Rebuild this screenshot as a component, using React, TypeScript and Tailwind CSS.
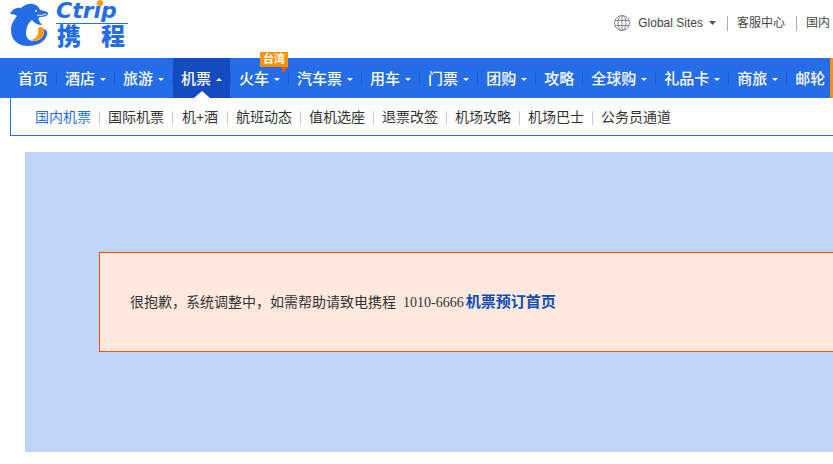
import React from "react";

type NavItem = { label: string; caret?: boolean; active?: boolean; tag?: string };

const navItems: NavItem[] = [
  { label: "首页" },
  { label: "酒店", caret: true },
  { label: "旅游", caret: true },
  { label: "机票", caret: true, active: true },
  { label: "火车", caret: true, tag: "台湾" },
  { label: "汽车票", caret: true },
  { label: "用车", caret: true },
  { label: "门票", caret: true },
  { label: "团购", caret: true },
  { label: "攻略" },
  { label: "全球购", caret: true },
  { label: "礼品卡", caret: true },
  { label: "商旅", caret: true },
  { label: "邮轮" },
];

const subItems = [
  "国内机票",
  "国际机票",
  "机+酒",
  "航班动态",
  "值机选座",
  "退票改签",
  "机场攻略",
  "机场巴士",
  "公务员通道",
];

function Logo() {
  return (
    <a href="#" aria-label="Ctrip 携程" className="block">
      <svg className="overflow-visible" width="122" height="54" viewBox="0 0 122 54">
        <path
          d="M4 14C6 10 10 7 15 8C18 5 23 3 27 4C31 5 33 7 34 10C37 11 41 11 42 13C42 16 38 17 34 17C31 18 33 21 36 25C32 25 28 23 26 20C22 23 20 28 20 33C20 38 23 41 27 41C33 41 37 38 38 33C37 32 36 30 37 29C40 29 42 32 41 35C39 42 31 46 22 46C12 46 5 40 5 30C5 24 8 20 11 16C8 14 6 14 4 14Z"
          fill="#256de6"
        />
        <circle cx="30" cy="11" r="1" fill="#fff" />
        <path d="M31 15C34 16 37 15 40 14" stroke="#fff" fill="none" />
        <path
          d="M32 28C34 26 38 27 38 30C39 36 35 40 28 41L25 40C31 38 33 35 32 28Z"
          fill="#ff9913"
        />
        <path d="M50 23.5H122" stroke="#256de6" />
        <text
          x="50"
          y="18"
          fill="#256de6"
          className="font-['DejaVu_Sans',sans-serif] text-[22px] font-bold italic"
        >
          Ctrip
        </text>
        <circle cx="94" cy="3" r="3" fill="#ff9913" />
        <text
          x="51"
          y="45"
          fill="#256de6"
          className="font-['Noto_Sans_CJK_SC',sans-serif] text-[24px] font-black"
        >
          携
        </text>
        <text
          x="95"
          y="45"
          fill="#256de6"
          className="font-['Noto_Sans_CJK_SC',sans-serif] text-[24px] font-black"
        >
          程
        </text>
      </svg>
    </a>
  );
}

function GlobeIcon() {
  return (
    <svg width="16" height="16" viewBox="0 0 16 16" fill="none" stroke="#888">
      <circle cx="8" cy="8" r="7.5" />
      <ellipse cx="8" cy="8" rx="4" ry="7.5" />
      <path d="M8 .5V15.5M1 5.5H15M1 10.5H15" />
    </svg>
  );
}

function Header() {
  return (
    <header className="flex h-[58px] items-start justify-between pl-[6px] pr-[3px]">
      <Logo />
      <div className="flex h-[46px] items-center text-[12px] text-[#444]">
        <button className="flex items-center">
          <GlobeIcon />
          <span className="ml-2">Global Sites</span>
          <svg className="ml-[6px]" width="7" height="4" viewBox="0 0 7 4">
            <path d="M0 0H7L3.5 4Z" fill="#555" />
          </svg>
        </button>
        <span className="ml-[11px] mr-[9px] h-[15px] w-px bg-[#aaa]" />
        <a href="#">客服中心</a>
        <span className="ml-[11px] mr-[9px] h-[15px] w-px bg-[#aaa]" />
        <a href="#">国内</a>
      </div>
    </header>
  );
}

function MainNav() {
  return (
    <nav className="flex h-10 justify-between bg-[#256de6] pl-[10px]">
      <ul className="flex">
        {navItems.map((item) => (
          <li key={item.label} className="relative flex shrink-0 items-center">
            <a
              href="#"
              className={`flex h-full items-center px-2 pt-[2px] text-[15px] font-medium text-white ${
                item.active ? "bg-[#144bbf]" : ""
              }`}
            >
              {item.label}
              {item.caret && (
                <svg className="ml-[5px]" width="6" height="3" viewBox="0 0 6 3">
                  <path d={item.active ? "M0 3H6L3 0Z" : "M0 0H6L3 3Z"} fill="#fff" />
                </svg>
              )}
            </a>
            <span className="h-[14px] w-px bg-[#2457d8]" />
            {item.active && (
              <svg className="absolute bottom-0 left-[21px]" width="16" height="7" viewBox="0 0 16 7">
                <path d="M0 7L8 0L16 7Z" fill="#fff" />
              </svg>
            )}
            {item.tag && (
              <span className="absolute -top-[6px] left-[29px] flex h-[15px] w-7 items-center justify-center bg-[#ff9100] text-[11px] font-bold text-white">
                {item.tag}
                <svg className="absolute right-0 top-full" width="6" height="6" viewBox="0 0 6 6">
                  <path d="M0 0H6L0 6Z" fill="#f2590c" />
                </svg>
              </span>
            )}
          </li>
        ))}
      </ul>
      <span className="w-[3px] shrink-0 bg-[#ff9100]" />
    </nav>
  );
}

function SubNav() {
  return (
    <nav className="ml-[10px] flex h-[38px] items-center border-b border-l border-[#256de6] pl-4 pt-[2px] text-[14px] text-[#333]">
      {subItems.map((label, i) => (
        <React.Fragment key={label}>
          {i > 0 && <span className="h-[14px] w-px bg-[#ccc]" />}
          <a
            href="#"
            className={`min-w-[54px] px-2 text-center whitespace-nowrap ${
              i === 0 ? "text-[#256de6]" : ""
            }`}
          >
            {label}
          </a>
        </React.Fragment>
      ))}
    </nav>
  );
}

export default function App() {
  return (
    <div className="overflow-hidden bg-white font-['Liberation_Sans','Noto_Sans_CJK_SC',sans-serif]">
      <Header />
      <MainNav />
      <SubNav />
      <main className="ml-[25px] mt-4 bg-[#bfd4f6] py-[100px] pl-[74px]">
        <p className="flex h-[100px] items-center border-y border-l border-[#ff4d00] bg-[#ffe9de] pl-[30px] font-['Liberation_Serif','Noto_Sans_CJK_SC',serif] text-[14px] text-[#333]">
          <span>很抱歉，系统调整中，如需帮助请致电携程</span>
          <span className="ml-[7px]">1010-6666</span>
          <a href="#" className="ml-[2px] text-[15px] font-bold text-[#0f4cb4]">
            机票预订首页
          </a>
        </p>
      </main>
    </div>
  );
}
